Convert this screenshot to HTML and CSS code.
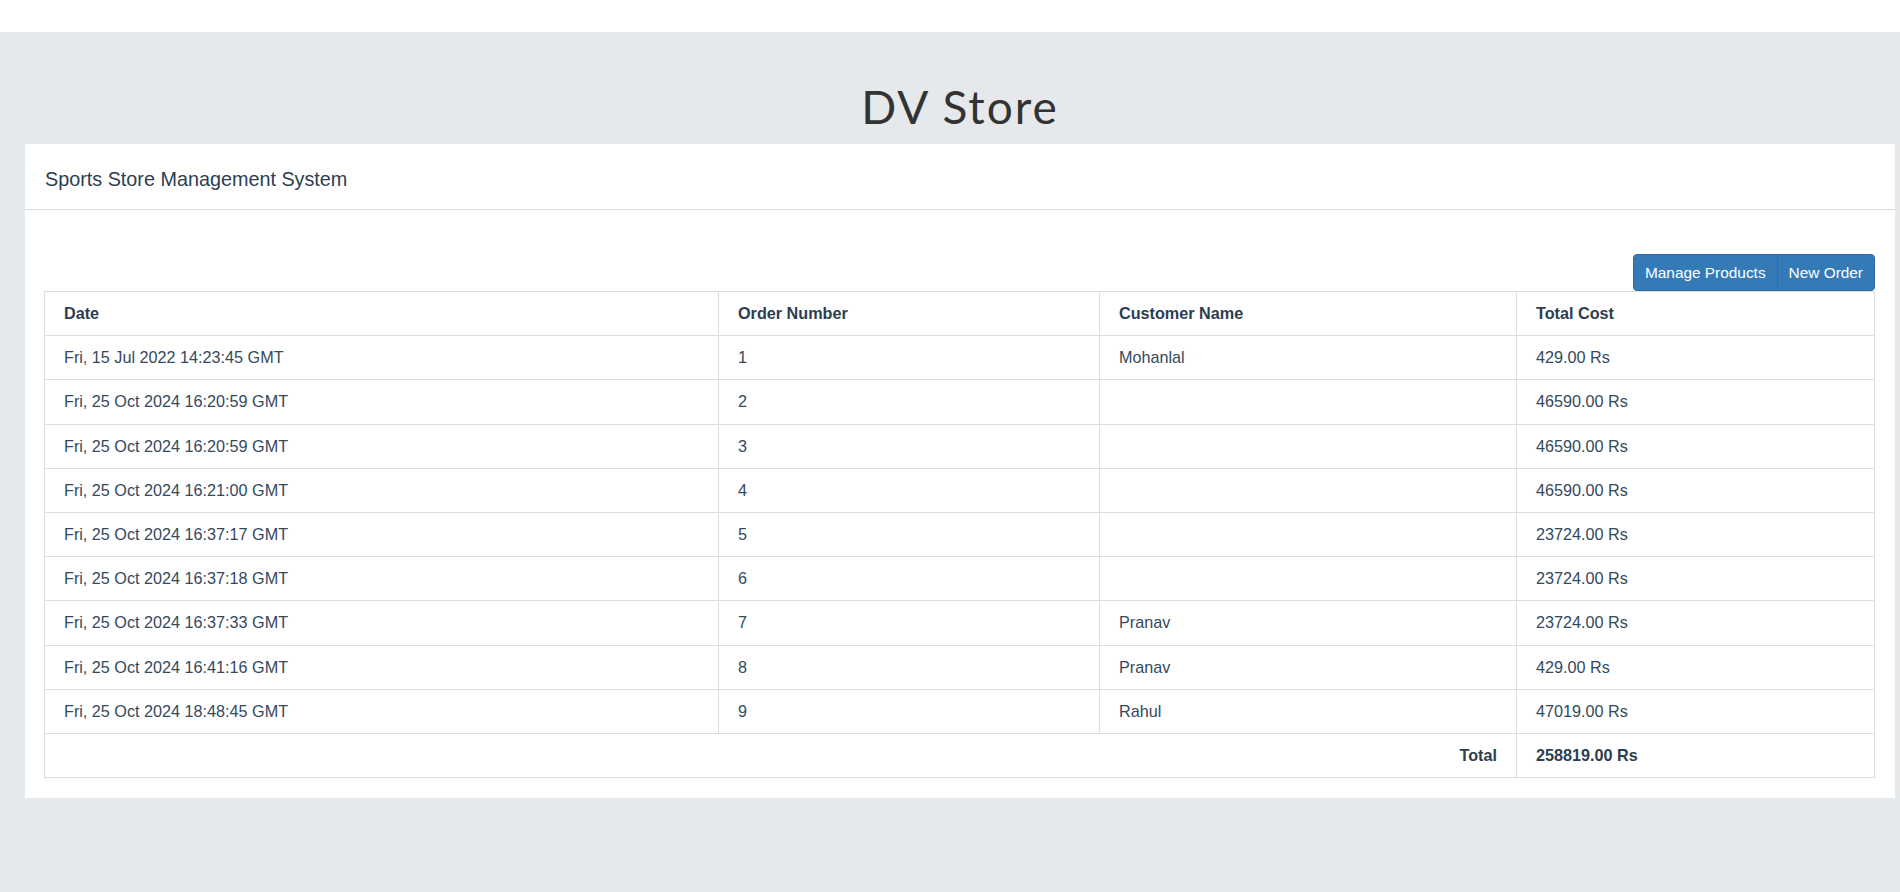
FILE: index.html
```html
<!DOCTYPE html>
<html>
<head>
<meta charset="utf-8">
<title>DV Store</title>
<link rel="stylesheet" href="styles.css">
</head>
<body>
<div class="topbar"></div>
<main class="page">
  <h1 class="brand">DV Store</h1>
  <section class="card">
    <div class="card-header">Sports Store Management System</div>
    <div class="card-body">
      <div class="actions">
        <button class="btn btn-first">Manage Products</button>
        <button class="btn btn-last">New Order</button>
      </div>
      <table class="orders">
        <colgroup>
          <col class="c-date">
          <col class="c-num">
          <col class="c-name">
          <col class="c-cost">
        </colgroup>
        <thead>
          <tr><th>Date</th><th>Order Number</th><th>Customer Name</th><th>Total Cost</th></tr>
        </thead>
        <tbody>
          <tr><td>Fri, 15 Jul 2022 14:23:45 GMT</td><td>1</td><td>Mohanlal</td><td>429.00 Rs</td></tr>
          <tr><td>Fri, 25 Oct 2024 16:20:59 GMT</td><td>2</td><td></td><td>46590.00 Rs</td></tr>
          <tr><td>Fri, 25 Oct 2024 16:20:59 GMT</td><td>3</td><td></td><td>46590.00 Rs</td></tr>
          <tr><td>Fri, 25 Oct 2024 16:21:00 GMT</td><td>4</td><td></td><td>46590.00 Rs</td></tr>
          <tr><td>Fri, 25 Oct 2024 16:37:17 GMT</td><td>5</td><td></td><td>23724.00 Rs</td></tr>
          <tr><td>Fri, 25 Oct 2024 16:37:18 GMT</td><td>6</td><td></td><td>23724.00 Rs</td></tr>
          <tr><td>Fri, 25 Oct 2024 16:37:33 GMT</td><td>7</td><td>Pranav</td><td>23724.00 Rs</td></tr>
          <tr><td>Fri, 25 Oct 2024 16:41:16 GMT</td><td>8</td><td>Pranav</td><td>429.00 Rs</td></tr>
          <tr><td>Fri, 25 Oct 2024 18:48:45 GMT</td><td>9</td><td>Rahul</td><td>47019.00 Rs</td></tr>
        </tbody>
        <tfoot>
          <tr><th colspan="3" class="total-label">Total</th><th>258819.00 Rs</th></tr>
        </tfoot>
      </table>
    </div>
  </section>
</main>
</body>
</html>
```
FILE: styles.css
```css
* { box-sizing: border-box; }
html, body { margin: 0; padding: 0; }
body {
  font-family: "Liberation Sans", Arial, sans-serif;
  color: #2c3e50;
  background: #fff;
}
.topbar { height: 32px; background: #fff; }
.page {
  background: #e5e9ec;
  min-height: 860px;
  padding: 0 5px 0 25px;
}
.brand {
  margin: 0;
  height: 112px;
  padding-top: 45px;
  text-align: center;
  font-family: "Comic Sans MS", "Lato", "DejaVu Sans", sans-serif;
  font-weight: 400;
  font-size: 46px;
  letter-spacing: 2px;
  line-height: 60px;
  color: #333;
}
.card { background: #fff; }
.card-header {
  padding: 23px 20px 17px 20px;
  font-size: 19.8px;
  line-height: 25px;
  border-bottom: 1px solid #ddd;
  color: #2c3e50;
}
.card-body { padding: 44px 20px 20px 19px; }
.actions { display: flex; justify-content: flex-end; }
.btn {
  font-family: "Liberation Sans", Arial, sans-serif;
  font-size: 15.4px;
  line-height: 21px;
  height: 37px;
  padding: 7px 11px;
  color: #fff;
  background: #337ab7;
  border: 1px solid #2e6da4;
  cursor: pointer;
}
.btn-first { border-radius: 4px 0 0 4px; }
.btn-last { border-radius: 0 4px 4px 0; margin-left: -1px; }
.orders {
  width: 100%;
  border-collapse: collapse;
  table-layout: fixed;
  border: 1px solid #ddd;
  font-size: 16.2px;
}
.c-date { width: 674px; }
.c-num { width: 381px; }
.c-name { width: 417px; }
.orders th, .orders td {
  border: 1px solid #ddd;
  padding: 11px 19px;
  line-height: 21.2px;
  text-align: left;
  vertical-align: top;
  color: #2c3e50;
}
.orders th { font-weight: 700; }
.orders td { color: #34495e; }
.orders .total-label { text-align: right; }
```
